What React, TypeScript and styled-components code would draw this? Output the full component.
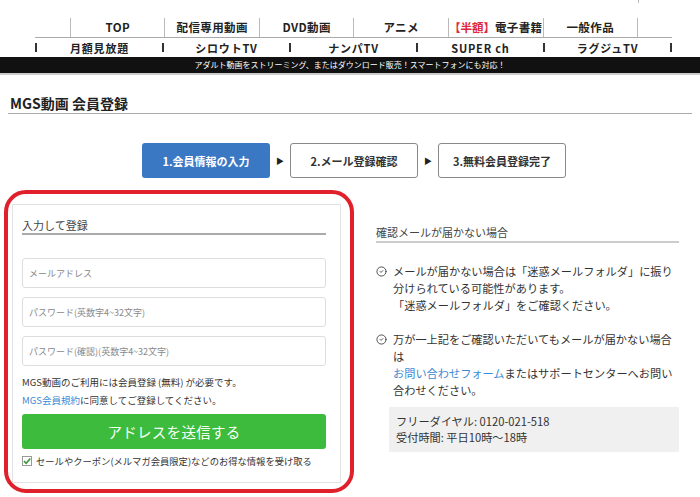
import React from 'react';
import styled, { createGlobalStyle } from 'styled-components';
import { CircleCheck } from 'lucide-react';

const GlobalStyle = createGlobalStyle`
  body {
    margin: 0;
    background: #fff;
    font-family: "Noto Sans CJK JP", "Noto Sans", sans-serif;
    color: #333;
  }
`;

const Page = styled.div`
  width: 700px;
  height: 497px;
  overflow: hidden;
  background: #fff;
`;

const TopStrip = styled.div`
  height: 18px;
`;

const Tick = styled.span`
  display: block;
  margin-left: 638px;
  width: 1px;
  height: 3px;
  background: #bbb;
`;

const MainNav = styled.div`
  margin-left: 70px;
  width: 567px;
  height: 19px;
  display: grid;
  grid-template-columns: repeat(6, 1fr);
  grid-template-rows: 19px;
  border-left: 1px solid #bbb;
`;

const MainNavItem = styled.div`
  border-right: 1px solid #bbb;
  display: flex;
  align-items: center;
  justify-content: center;
  white-space: nowrap;
  font-size: 11.5px;
  font-weight: 700;
  letter-spacing: 0.4px;
  color: #222;
  line-height: 19px;

  span {
    color: #e0283c;
    letter-spacing: 0;
  }
`;

const SubNav = styled.div`
  margin-left: 35px;
  width: 637px;
  height: 19px;
  border-top: 1px solid #aaa;
  display: flex;
  align-items: center;
`;

const SubSep = styled.span`
  width: 2px;
  height: 9px;
  background: #333;
`;

const SubNavItem = styled.div`
  flex: 1;
  text-align: center;
  white-space: nowrap;
  font-size: 11px;
  font-weight: 700;
  letter-spacing: 0.8px;
  color: #222;
`;

const BlackBar = styled.div`
  height: 16px;
  line-height: 16px;
  background: #111;
  color: #fff;
  font-size: 8px;
  text-align: center;
  border-bottom: 2px solid #ccc;
`;

const Title = styled.h1`
  margin: 18px 8px 0;
  padding: 0 0 0 2px;
  font-size: 14px;
  font-weight: 700;
  line-height: 20px;
  color: #222;
  border-bottom: 1px solid #aaa;
`;

const Steps = styled.div`
  margin-top: 29px;
  padding-left: 8px;
  display: flex;
  justify-content: center;
  align-items: center;
`;

const Step = styled.div<{ $active?: boolean }>`
  width: ${(p) => (p.$active ? '128px' : '126px')};
  height: ${(p) => (p.$active ? '35px' : '33px')};
  display: flex;
  align-items: center;
  justify-content: center;
  font-size: 11px;
  font-weight: 700;
  border-radius: 3px;
  color: ${(p) => (p.$active ? '#fff' : '#333')};
  background: ${(p) => (p.$active ? '#3a78c4' : '#fff')};
  border: ${(p) => (p.$active ? 'none' : '1px solid #888')};
`;

const StepArrow = styled.div`
  width: 20px;
  text-align: center;
  font-size: 8px;
  color: #222;
`;

const Main = styled.div`
  margin-top: 12px;
  padding-left: 4px;
  display: flex;
  align-items: flex-start;
`;

const Highlight = styled.div`
  width: 350px;
  box-sizing: border-box;
  border: 4px solid #e0202a;
  border-radius: 22px;
  padding: 10px 9px 6px 4px;
`;

const Card = styled.div`
  border: 1px solid #e2e2e2;
  padding: 13px 14px 13px 9px;
`;

const CardTitle = styled.h2`
  margin: 0;
  font-size: 11px;
  font-weight: 400;
  line-height: 15px;
  color: #444;
  border-bottom: 2px solid #aaa;
`;

const Fields = styled.div`
  margin-top: 23px;
  display: flex;
  flex-direction: column;
  gap: 9px;
`;

const Field = styled.input`
  box-sizing: border-box;
  width: 100%;
  height: 30px;
  padding: 0 6px;
  border: 1px solid #ddd;
  border-radius: 3px;
  font-family: inherit;
  font-size: 9px;
  color: #333;

  &::placeholder {
    color: #888;
  }
`;

const Note = styled.p<{ $first?: boolean }>`
  margin: ${(p) => (p.$first ? '7px 0 0' : '0')};
  font-size: 9.5px;
  line-height: 18px;
  color: #333;

  a {
    color: #3a8ad6;
    text-decoration: none;
  }
`;

const SubmitButton = styled.button`
  margin-top: 5px;
  width: 100%;
  height: 35px;
  border: none;
  border-radius: 3px;
  background: #3cbb3c;
  color: #f4fff4;
  font-family: inherit;
  font-size: 14.5px;
  letter-spacing: 0.3px;
`;

const OptIn = styled.label`
  margin-top: 4px;
  display: flex;
  align-items: center;
  gap: 4px;
  font-size: 9.3px;
  line-height: 16px;
  color: #333;
`;

const Side = styled.div`
  margin-left: 22px;
  width: 303px;
  padding-top: 34px;
`;

const SideTitle = styled.h2`
  margin: 0;
  font-size: 11px;
  font-weight: 400;
  line-height: 17px;
  color: #444;
  border-bottom: 2px solid #ccc;
`;

const InfoList = styled.div`
  margin-top: 20px;
  display: flex;
  flex-direction: column;
  gap: 17px;
`;

const InfoItem = styled.div`
  display: flex;
  align-items: flex-start;
`;

const InfoIcon = styled.div`
  width: 17px;
  flex: none;
  display: flex;
  padding-top: 3px;
  color: #444;
`;

const InfoText = styled.p`
  margin: 0;
  width: 286px;
  font-size: 11.2px;
  line-height: 17px;
  color: #333;

  a {
    color: #3a8ad6;
    text-decoration: none;
  }
`;

const ContactBox = styled.div`
  margin: 8px 0 0 13px;
  height: 45px;
  box-sizing: border-box;
  padding: 6px 7px;
  background: #f0f0f0;
  font-size: 11.2px;
  line-height: 16px;
  color: #333;
`;

const CheckBox = () => (
  <svg width="10" height="10" viewBox="0 0 10 10">
    <rect x="0.5" y="0.5" width="9" height="9" fill="#fff" stroke="#999" />
    <path d="M2 5.2 L4.2 7.3 L8.3 2.5" fill="none" stroke="#3a9a3a" strokeWidth="1.6" />
  </svg>
);

const mainNav = ['TOP', '配信専用動画', 'DVD動画', 'アニメ', '', '一般作品'];
const subNav = ['月額見放題', 'シロウトTV', 'ナンパTV', 'SUPER ch', 'ラグジュTV'];

export default function App() {
  return (
    <Page>
      <GlobalStyle />
      <TopStrip>
        <Tick />
      </TopStrip>
      <MainNav>
        {mainNav.map((label, i) =>
          i === 4 ? (
            <MainNavItem key="ebook">
              <span>【半額】</span>電子書籍
            </MainNavItem>
          ) : (
            <MainNavItem key={label}>{label}</MainNavItem>
          )
        )}
      </MainNav>
      <SubNav>
        <SubSep />
        {subNav.map((label) => (
          <React.Fragment key={label}>
            <SubNavItem>{label}</SubNavItem>
            <SubSep />
          </React.Fragment>
        ))}
      </SubNav>
      <BlackBar>アダルト動画をストリーミング、またはダウンロード販売！スマートフォンにも対応！</BlackBar>

      <Title>MGS動画 会員登録</Title>

      <Steps>
        <Step $active>1.会員情報の入力</Step>
        <StepArrow>▶</StepArrow>
        <Step>2.メール登録確認</Step>
        <StepArrow>▶</StepArrow>
        <Step>3.無料会員登録完了</Step>
      </Steps>

      <Main>
        <Highlight>
          <Card>
            <CardTitle>入力して登録</CardTitle>
            <Fields>
              <Field type="text" placeholder="メールアドレス" />
              <Field type="password" placeholder="パスワード(英数字4~32文字)" />
              <Field type="password" placeholder="パスワード(確認)(英数字4~32文字)" />
            </Fields>
            <Note $first>MGS動画のご利用には会員登録 (無料) が必要です。</Note>
            <Note>
              <a href="#">MGS会員規約</a>に同意してご登録してください。
            </Note>
            <SubmitButton>アドレスを送信する</SubmitButton>
            <OptIn>
              <CheckBox />
              セールやクーポン(メルマガ会員限定)などのお得な情報を受け取る
            </OptIn>
          </Card>
        </Highlight>

        <Side>
          <SideTitle>確認メールが届かない場合</SideTitle>
          <InfoList>
            <InfoItem>
              <InfoIcon>
                <CircleCheck size={11} strokeWidth={2} />
              </InfoIcon>
              <InfoText>
                メールが届かない場合は「迷惑メールフォルダ」に振り分けられている可能性があります。
                <br />
                「迷惑メールフォルダ」をご確認ください。
              </InfoText>
            </InfoItem>
            <InfoItem>
              <InfoIcon>
                <CircleCheck size={11} strokeWidth={2} />
              </InfoIcon>
              <InfoText>
                万が一上記をご確認いただいてもメールが届かない場合は
                <br />
                <a href="#">お問い合わせフォーム</a>またはサポートセンターへお問い合わせください。
              </InfoText>
            </InfoItem>
          </InfoList>
          <ContactBox>
            フリーダイヤル: 0120-021-518
            <br />
            受付時間: 平日10時～18時
          </ContactBox>
        </Side>
      </Main>
    </Page>
  );
}
